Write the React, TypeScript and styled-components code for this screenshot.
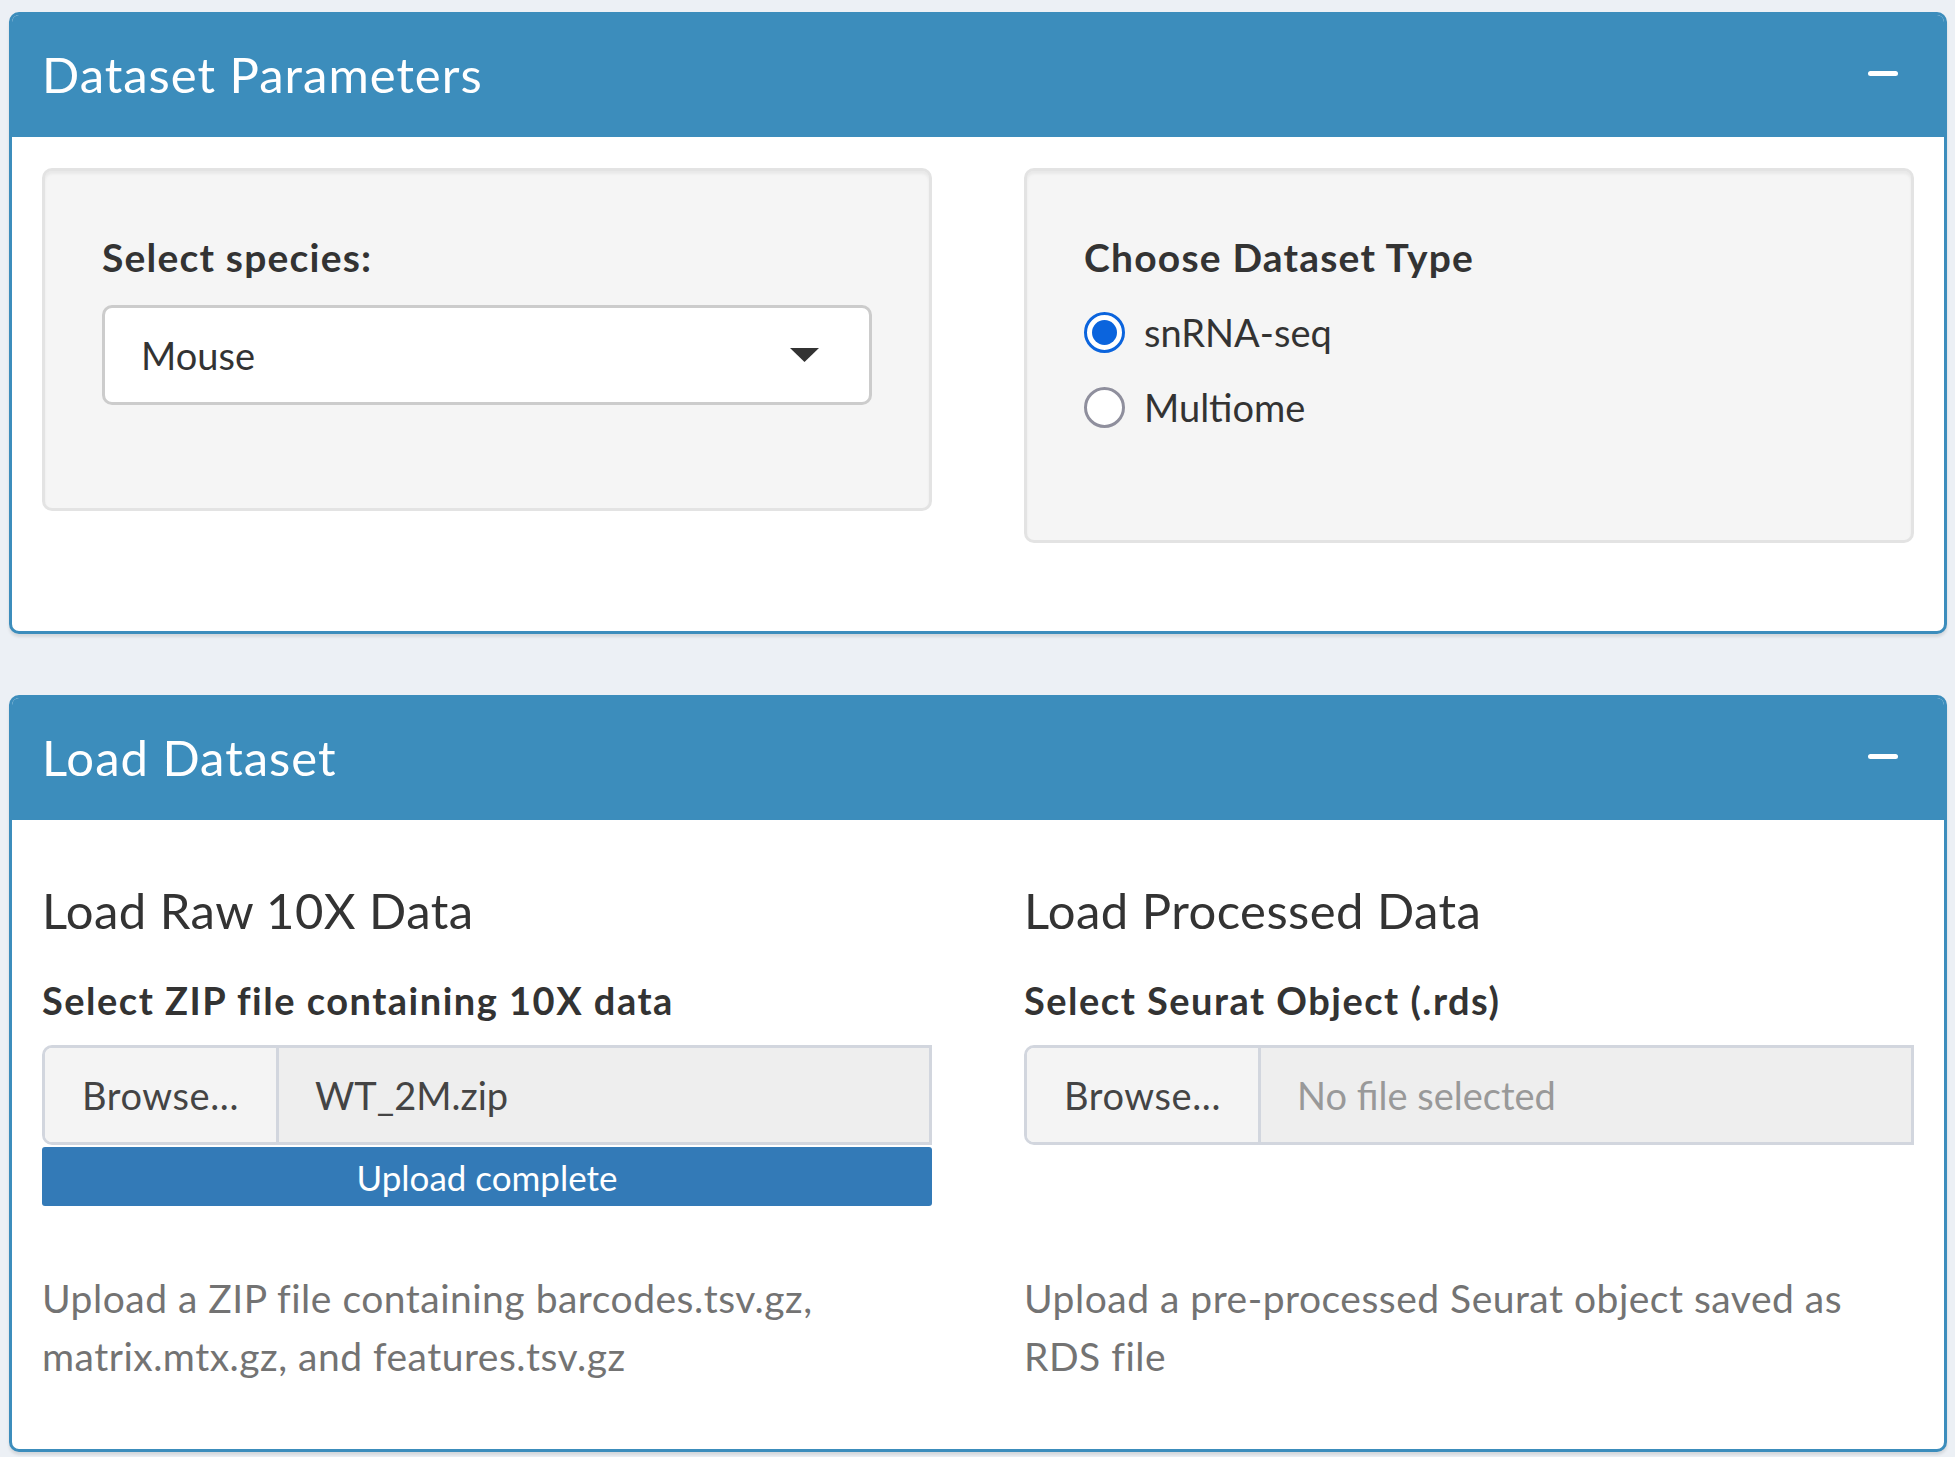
import React from "react";
import styled, { createGlobalStyle } from "styled-components";

const GlobalStyle = createGlobalStyle`
  html, body {
    margin: 0;
    padding: 0;
    background: #ecf0f5;
  }
  body {
    font-family: "Lato", "Liberation Sans", sans-serif;
    color: #333;
  }
`;

const Page = styled.div`
  padding: 12px 8px 8px 9px;
`;

const Box = styled.section`
  border: 3px solid #3c8dbc;
  border-radius: 10px;
  background: #fff;
  box-shadow: 0 3px 3px rgba(0, 0, 0, 0.1);
  overflow: hidden;
  margin-bottom: 61px;

  &:last-child {
    margin-bottom: 0;
  }
`;

const BoxHeader = styled.header`
  display: flex;
  align-items: center;
  justify-content: space-between;
  height: 122px;
  padding: 0 46px 0 30px;
  background: #3c8dbc;
  color: #fff;
`;

const BoxTitle = styled.h2`
  margin: -3px 0 0;
  font-size: 49px;
  font-weight: 400;
  line-height: 1;
  letter-spacing: 1px;
`;

const Collapse = styled.span`
  display: block;
  width: 30px;
  height: 5px;
  border-radius: 3px;
  background: #fff;
  margin-top: -6px;
`;

const BoxBody = styled.div<{ $pad: string }>`
  display: grid;
  grid-template-columns: 890px 890px;
  column-gap: 92px;
  align-items: start;
  padding: ${(p) => p.$pad};
`;

const Well = styled.div`
  border: 3px solid #e3e3e3;
  border-radius: 10px;
  background: #f5f5f5;
  box-shadow: inset 0 3px 3px rgba(0, 0, 0, 0.05);
  padding: 58px 57px;
  margin-bottom: 58px;
`;

const Label = styled.div<{ $gap: number }>`
  font-size: 39px;
  font-weight: 700;
  letter-spacing: 1.2px;
  line-height: 56px;
  margin-bottom: ${(p) => p.$gap}px;
`;

const Select = styled.div`
  display: flex;
  align-items: center;
  justify-content: space-between;
  height: 100px;
  box-sizing: border-box;
  border: 3px solid #cccccc;
  border-radius: 10px;
  background: #fff;
  padding: 0 50px 0 36px;
  font-size: 38px;
  margin-bottom: 45px;
`;

const RadioGroup = styled.div`
  display: flex;
  flex-direction: column;
  gap: 25px;
  margin-bottom: 50px;
`;

const RadioRow = styled.label`
  display: flex;
  align-items: center;
  gap: 19px;
  height: 50px;
  font-size: 38px;
  line-height: 1;
`;

const RadioDot = styled.span<{ $checked?: boolean }>`
  display: flex;
  align-items: center;
  justify-content: center;
  width: 41px;
  height: 41px;
  box-sizing: border-box;
  border-radius: 50%;
  border: 3px solid ${(p) => (p.$checked ? "#0b64dd" : "#8f8f9d")};
  background: #fff;

  &::after {
    content: "";
    display: ${(p) => (p.$checked ? "block" : "none")};
    width: 25px;
    height: 25px;
    border-radius: 50%;
    background: #0b64dd;
  }
`;

const SectionTitle = styled.h3`
  margin: 33px 0 36px;
  font-size: 49px;
  font-weight: 400;
  line-height: 54px;
  letter-spacing: 0.45px;
`;

const FileLabel = styled.div`
  font-size: 38px;
  font-weight: 700;
  letter-spacing: 1.5px;
  line-height: 54px;
  margin-bottom: 18px;
`;

const FileGroup = styled.div`
  display: flex;
  height: 100px;
  box-sizing: border-box;
  border: 3px solid #d2d6de;
  border-radius: 10px 0 0 10px;
  overflow: hidden;
  font-size: 38px;
`;

const BrowseButton = styled.div`
  display: flex;
  align-items: center;
  width: 234px;
  box-sizing: border-box;
  padding-left: 37px;
  background: #f4f4f4;
  color: #444;
  letter-spacing: 0.6px;
  border-right: 3px solid #d2d6de;
`;

const FileName = styled.div<{ $empty?: boolean }>`
  flex: 1;
  display: flex;
  align-items: center;
  padding-left: 36px;
  background: #eeeeee;
  color: ${(p) => (p.$empty ? "#999" : "#444")};
`;

const Progress = styled.div<{ $visible?: boolean }>`
  visibility: ${(p) => (p.$visible ? "visible" : "hidden")};
  margin-top: 2px;
  height: 59px;
  border-radius: 3px;
  background: #337ab7;
  color: #fff;
  font-size: 35px;
  display: flex;
  align-items: center;
  justify-content: center;
`;

const Help = styled.p`
  margin: 63px 0 0;
  font-size: 39px;
  line-height: 58px;
  letter-spacing: 0.5px;
  color: #737373;
`;

const BottomSpace = styled.div`
  height: 30px;
`;

const Caret = () => (
  <svg width="29" height="14" viewBox="0 0 29 14">
    <polygon points="0,0 29,0 14.5,14" fill="#333" />
  </svg>
);

type FileColumnProps = {
  title: string;
  label: string;
  file?: string;
  help: string;
};

const FileColumn = ({ title, label, file, help }: FileColumnProps) => (
  <div>
    <SectionTitle>{title}</SectionTitle>
    <FileLabel>{label}</FileLabel>
    <FileGroup>
      <BrowseButton>Browse...</BrowseButton>
      <FileName $empty={!file}>{file || "No file selected"}</FileName>
    </FileGroup>
    <Progress $visible={!!file}>Upload complete</Progress>
    <Help>{help}</Help>
  </div>
);

export default function App() {
  return (
    <>
      <GlobalStyle />
      <Page>
        <Box>
          <BoxHeader>
            <BoxTitle>Dataset Parameters</BoxTitle>
            <Collapse />
          </BoxHeader>
          <BoxBody $pad="31px 31px 0 30px">
            <Well>
              <Label $gap={20}>Select species:</Label>
              <Select>
                <span>Mouse</span>
                <Caret />
              </Select>
            </Well>
            <Well>
              <Label $gap={22}>Choose Dataset Type</Label>
              <RadioGroup>
                <RadioRow>
                  <RadioDot $checked />
                  snRNA-seq
                </RadioRow>
                <RadioRow>
                  <RadioDot />
                  Multiome
                </RadioRow>
              </RadioGroup>
            </Well>
          </BoxBody>
          <BottomSpace />
        </Box>
        <Box>
          <BoxHeader>
            <BoxTitle>Load Dataset</BoxTitle>
            <Collapse />
          </BoxHeader>
          <BoxBody $pad="30px 31px 64px 30px">
            <FileColumn
              title="Load Raw 10X Data"
              label="Select ZIP file containing 10X data"
              file="WT_2M.zip"
              help="Upload a ZIP file containing barcodes.tsv.gz, matrix.mtx.gz, and features.tsv.gz"
            />
            <FileColumn
              title="Load Processed Data"
              label="Select Seurat Object (.rds)"
              help="Upload a pre-processed Seurat object saved as RDS file"
            />
          </BoxBody>
        </Box>
      </Page>
    </>
  );
}
